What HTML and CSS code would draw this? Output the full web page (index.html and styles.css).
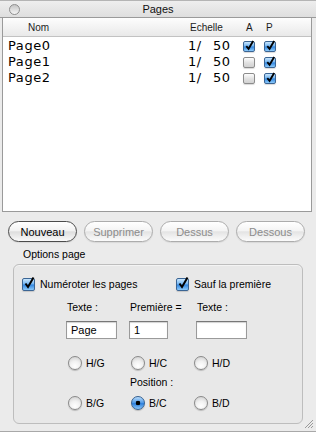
FILE: index.html
```html
<!DOCTYPE html>
<html>
<head>
    <meta charset="utf-8" />
    <title>Pages</title>
    <link rel="stylesheet" href="styles.css">
</head>
<body>
    <div class="window">
        <div class="titlebar">
            <span class="close"></span>
            <span class="title">Pages</span>
            <span></span>
        </div>

        <div class="list">
            <div class="row list-head">
                <span class="c-name">Nom</span>
                <span class="c-scale">Echelle</span>
                <span class="c-a">A</span>
                <span class="c-p">P</span>
            </div>
            <div class="rows">
                <div class="row">
                    <span class="c-name">Page0</span><span>1/</span><span>50</span>
                    <span class="cb sm on"><svg viewBox="0 0 12 12"><path d="M2.5 5.5 L5 8.5 L10 0" /></svg></span>
                    <span class="cb sm on"><svg viewBox="0 0 12 12"><path d="M2.5 5.5 L5 8.5 L10 0" /></svg></span>
                </div>
                <div class="row">
                    <span class="c-name">Page1</span><span>1/</span><span>50</span>
                    <span class="cb sm"></span>
                    <span class="cb sm on"><svg viewBox="0 0 12 12"><path d="M2.5 5.5 L5 8.5 L10 0" /></svg></span>
                </div>
                <div class="row">
                    <span class="c-name">Page2</span><span>1/</span><span>50</span>
                    <span class="cb sm"></span>
                    <span class="cb sm on"><svg viewBox="0 0 12 12"><path d="M2.5 5.5 L5 8.5 L10 0" /></svg></span>
                </div>
            </div>
        </div>

        <div class="buttons">
            <span class="btn default">Nouveau</span>
            <span class="btn">Supprimer</span>
            <span class="btn">Dessus</span>
            <span class="btn">Dessous</span>
        </div>

        <div class="group-label">Options page</div>
        <div class="group">
            <div class="checks">
                <label class="check"><span class="cb on"><svg viewBox="0 0 12 12"><path d="M2.5 5.5 L5 9 L10.5 -0.5" /></svg></span>Numéroter les pages</label>
                <label class="check"><span class="cb on"><svg viewBox="0 0 12 12"><path d="M2.5 5.5 L5 9 L10.5 -0.5" /></svg></span>Sauf la première</label>
            </div>

            <div class="fields labels">
                <span>Texte :</span>
                <span>Première =</span>
                <span>Texte :</span>
            </div>
            <div class="fields inputs">
                <input class="w50" type="text" value="Page" readonly />
                <input class="w38" type="text" value="1" readonly />
                <input class="w50" type="text" value="" readonly />
            </div>

            <div class="radios">
                <span class="radio"><span class="rd"></span>H/G</span>
                <span class="radio"><span class="rd"></span>H/C</span>
                <span class="radio"><span class="rd"></span>H/D</span>
            </div>
            <div class="pos-label">Position :</div>
            <div class="radios second">
                <span class="radio"><span class="rd"></span>B/G</span>
                <span class="radio"><span class="rd on"></span>B/C</span>
                <span class="radio"><span class="rd"></span>B/D</span>
            </div>
        </div>

        <svg class="grip" viewBox="0 0 11 11">
            <path d="M10 2 L2 10 M10 5 L5 10 M10 8 L8 10" />
        </svg>
    </div>
</body>
</html>
```

FILE: styles.css
```css
* {margin: 0;padding: 0;box-sizing: border-box;}
body {font: 10.5px/14px "Liberation Sans", Arial, sans-serif;color: #000;background: #ececec;}

.window {width: 316px;height: 432px;position: relative;background: #ebebeb;border-bottom: 1px solid #a8a8a8;}

/* barre de titre */
.titlebar {height: 18px;display: grid;grid-template-columns: 1fr auto 1fr;align-items: center;background: linear-gradient(#eeeeee, #dedede);border-top: 1px solid #b4b4b4;border-bottom: 1px solid #9a9a9a;}
.close {width: 11px;height: 11px;margin-left: 9px;border-radius: 50%;border: 1px solid #8e8e8e;background: linear-gradient(#c4c4c4, #f6f6f6);}
.title {font-size: 11px;color: #111;}

/* liste des pages */
.list {margin-left: 2px;width: 310px;height: 194px;background: #fff;border: 1px solid #9a9a9a;border-top: 0;}
.row {display: grid;grid-template-columns: 185px 25px 30px 21px 21px;align-items: center;height: 16px;font: 13px/16px "DejaVu Sans", Verdana, sans-serif;letter-spacing: 0.6px;}
.row .c-name {padding-left: 5px;}
.list-head {height: 19px;font: 10px/18px "Liberation Sans", Arial, sans-serif;letter-spacing: 0;color: #1c1c1c;padding-top: 1px;background: linear-gradient(#fdfdfd, #e9e9e9);border-bottom: 1px solid #c2c2c2;}
.list-head .c-name {padding-left: 25px;}
.list-head .c-scale {grid-column: 2 / 4;padding-left: 2px;}
.list-head .c-a {padding-left: 3px;}
.list-head .c-p {padding-left: 2px;}
.rows {padding-top: 1px;}

/* cases a cocher */
.cb {position: relative;flex: none;width: 13px;height: 13px;border: 1px solid #8c8c8c;border-radius: 2px;background: linear-gradient(#fdfdfd, #e0e0e0 55%, #d2d2d2);box-shadow: 0 1px 1px rgba(0,0,0,0.15);}
.cb.sm {width: 12px;height: 11px;}
.cb.on {border-color: #3b6594;background: linear-gradient(#c9e6fd, #6fb3f1 48%, #2f84df 52%, #8ccafb);}
.cb svg {position: absolute;left: 0;top: -1px;width: 12px;height: 12px;overflow: visible;}
.cb.sm svg {width: 11px;height: 11px;top: -1px;}
.cb path {fill: none;stroke: #000;stroke-width: 2;stroke-linecap: butt;stroke-linejoin: miter;}

/* boutons */
.buttons {display: flex;gap: 7px;padding-left: 8px;margin-top: 9px;}
.btn {width: 69px;height: 21px;display: flex;align-items: center;justify-content: center;border-radius: 11px;border: 1px solid #acacac;background: linear-gradient(#ffffff, #f4f4f4 45%, #e4e4e4 52%, #f2f2f2 80%, #fbfbfb);color: #8c8c8c;font-size: 11px;box-shadow: 0 1px 1px rgba(0,0,0,0.08);}
.btn.default {border-color: #4c4c4c;color: #000;background: linear-gradient(#ffffff, #f2f2f2 45%, #dedede 52%, #eeeeee 80%, #fafafa);}

/* options */
.group-label {margin-top: 5px;padding-left: 23px;}
.group {margin: 3px 0 0 13px;width: 290px;height: 160px;border: 1px solid #bdbdbd;border-radius: 6px;background: #e8e8e8;box-shadow: inset 0 1px 0 rgba(255,255,255,0.5);}

.checks {display: flex;align-items: center;height: 14px;margin-top: 12px;padding-left: 8px;}
.check {display: flex;align-items: center;gap: 5px;}
.check:first-child {width: 154px;}

.fields {display: grid;grid-template-columns: 63px 67px 50px;padding-left: 52px;}
.labels {margin-top: 9px;}
.labels span {padding-left: 1px;}
.inputs {margin-top: 7px;}
.inputs input {height: 18px;font: 11px "Liberation Sans", Arial, sans-serif;color: #000;padding: 0 0 0 4px;background: #fff;border: 1px solid #9a9a9a;border-top-color: #777;box-shadow: inset 0 1px 1px rgba(0,0,0,0.18);outline: none;}
.inputs .w50 {width: 51px;}
.inputs .w38 {width: 39px;}

.radios {display: grid;grid-template-columns: 63px 63px 63px;align-items: center;height: 14px;margin-top: 17px;padding-left: 54px;}
.radios.second {margin-top: 7px;}
.radio {display: flex;align-items: center;gap: 4px;}
.rd {flex: none;width: 14px;height: 14px;border-radius: 50%;border: 1px solid #8a8a8a;background: radial-gradient(circle at 50% 75%, #ffffff 0, #f1f1f1 45%, #c9c9c9 100%);box-shadow: 0 1px 1px rgba(0,0,0,0.2);}
.rd.on {border-color: #35608f;background: radial-gradient(circle, #000 0 2px, transparent 2.6px), linear-gradient(#b8dcfc, #4b97e6 50%, #2c7fdc 55%, #8cc8fb);}
.pos-label {margin-top: 5px;padding-left: 116px;}

.grip {position: absolute;right: 2px;bottom: 2px;width: 11px;height: 11px;}
.grip path {stroke: #9a9a9a;stroke-width: 1;fill: none;}
```
